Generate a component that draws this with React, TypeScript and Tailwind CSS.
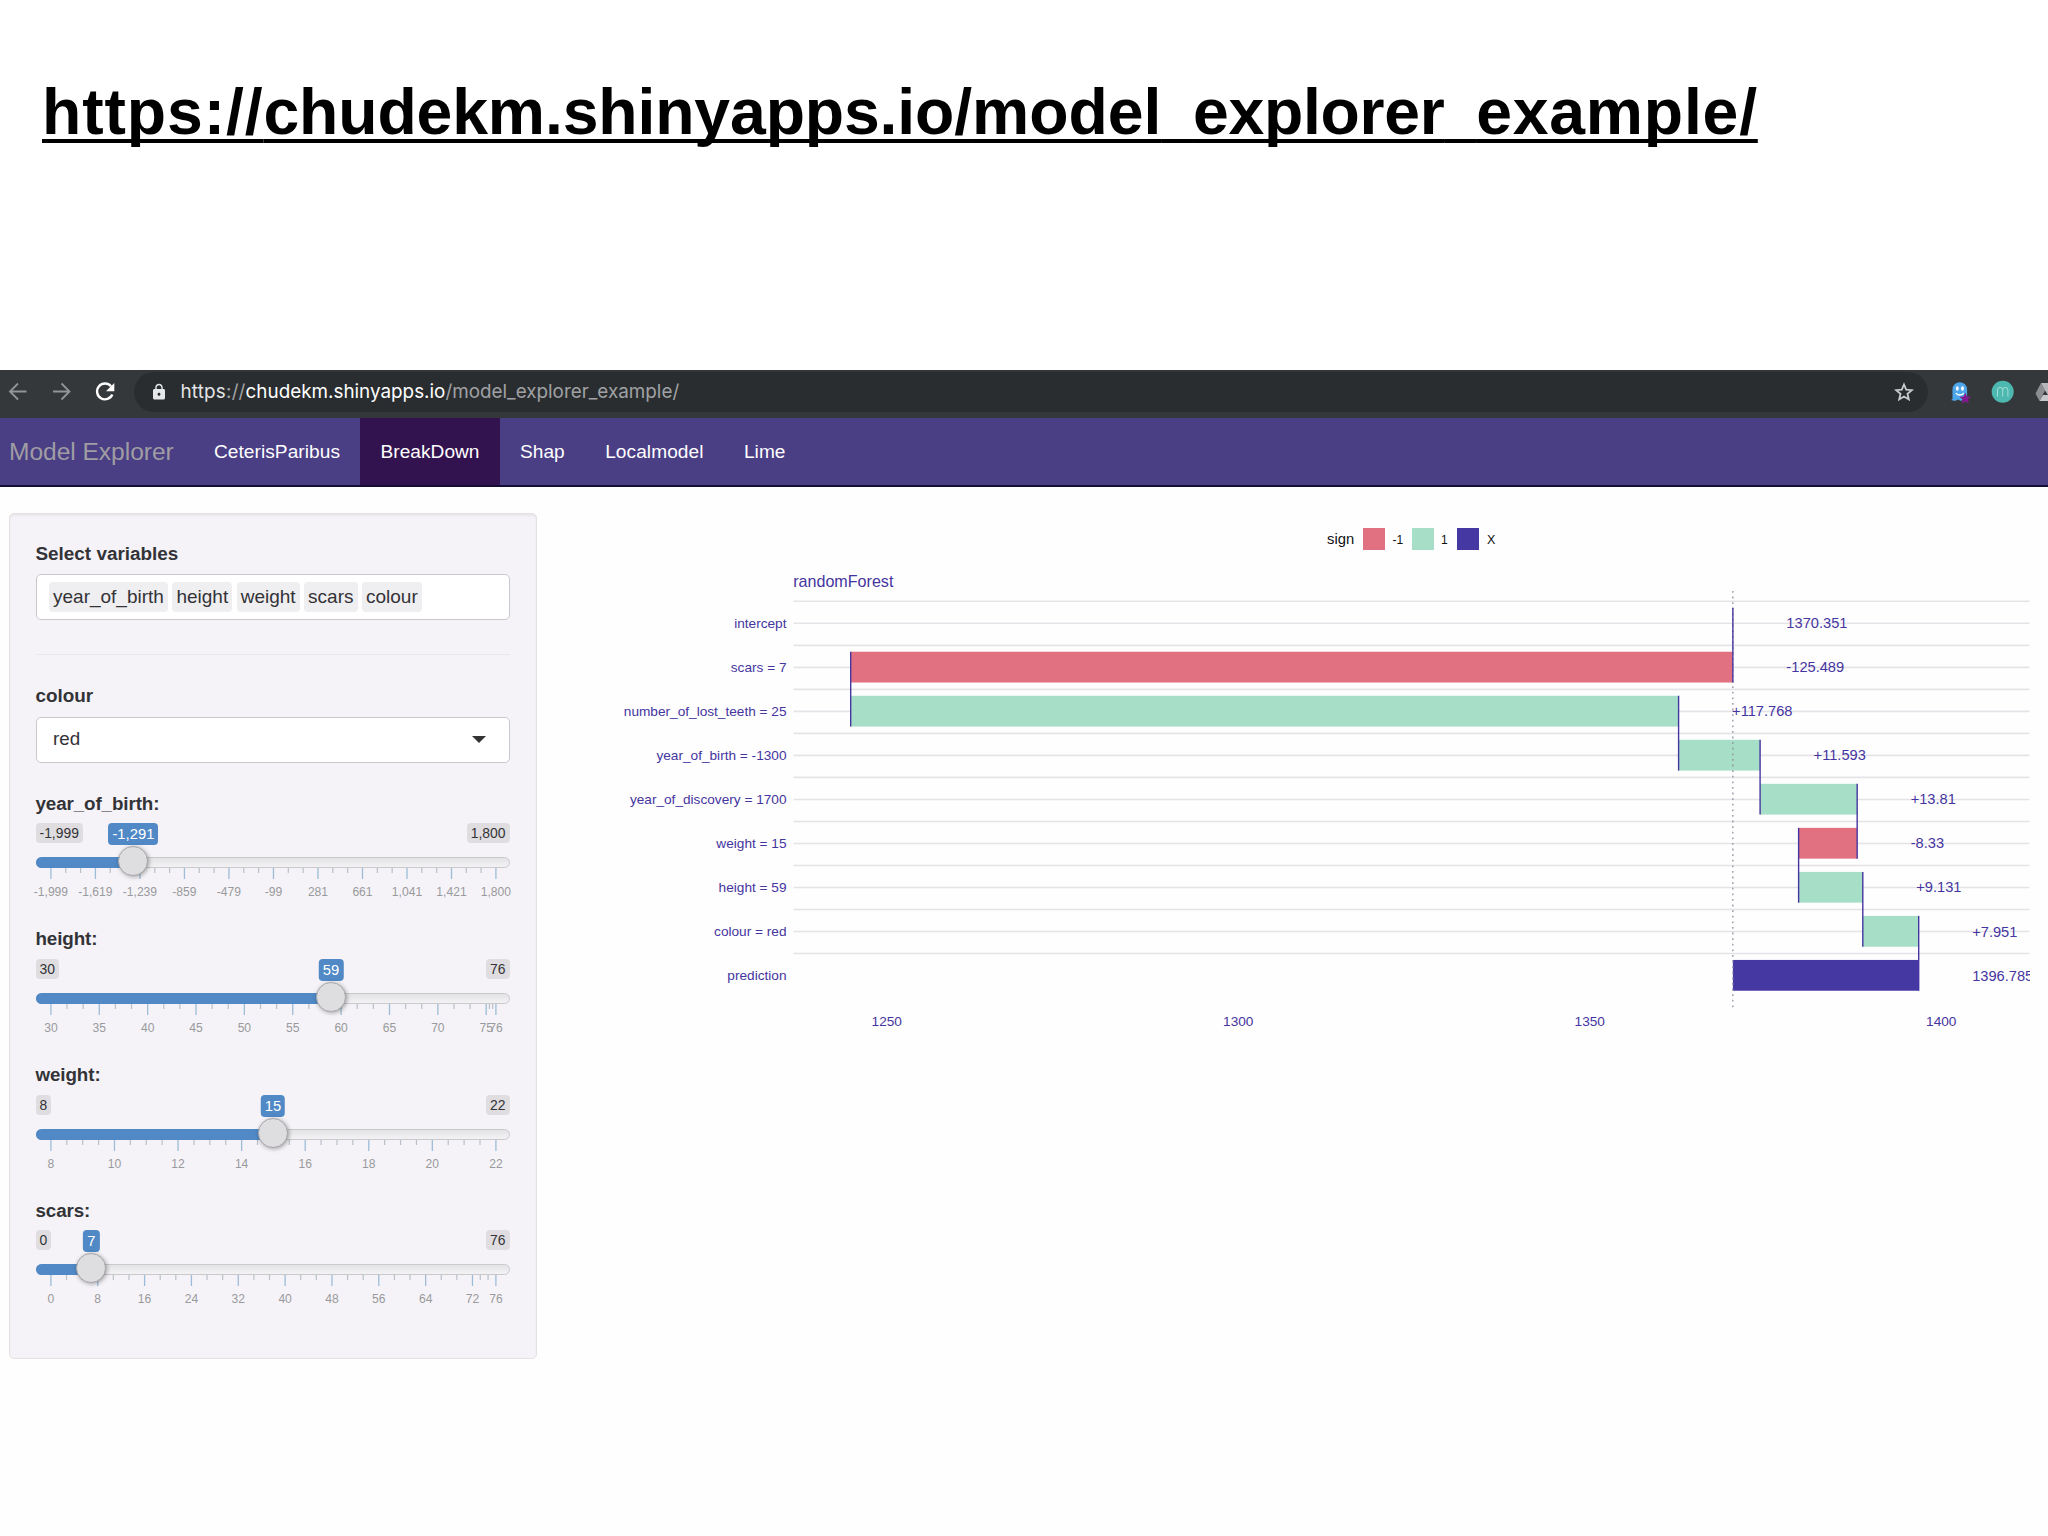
import { MdLock } from 'react-icons/md';

const navItems = ['CeterisParibus', 'BreakDown', 'Shap', 'Localmodel', 'Lime'];
const variables = ['year_of_birth', 'height', 'weight', 'scars', 'colour'];

type SliderProps = {
  name: string;
  min: number;
  max: number;
  value: number;
  ticks: number[];
  minor: number;
};

const sliders: SliderProps[] = [
  {
    name: 'year_of_birth',
    min: -1999,
    max: 1800,
    value: -1291,
    ticks: [-1999, -1619, -1239, -859, -479, -99, 281, 661, 1041, 1421, 1800],
    minor: 2,
  },
  { name: 'height', min: 30, max: 76, value: 59, ticks: [30, 35, 40, 45, 50, 55, 60, 65, 70, 75, 76], minor: 2 },
  { name: 'weight', min: 8, max: 22, value: 15, ticks: [8, 10, 12, 14, 16, 18, 20, 22], minor: 3 },
  { name: 'scars', min: 0, max: 76, value: 7, ticks: [0, 8, 16, 24, 32, 40, 48, 56, 64, 72, 76], minor: 2 },
];

const fmt = (n: number) => n.toLocaleString('en-US');

function Slider({ name, min, max, value, ticks, minor }: SliderProps) {
  // the handle travels between 15px insets of the 474px track
  const pos = (v: number) => 14.9 + ((v - min) / (max - min)) * 445;
  const handle = pos(value) + 0.1;
  const small = ticks.slice(1).flatMap((t, i) =>
    Array.from({ length: minor }, (_, k) => pos(ticks[i] + ((t - ticks[i]) * (k + 1)) / (minor + 1)))
  );

  return (
    <div className="h-[135.75px]">
      <label className="block h-[27px] text-[18.8px] leading-[27px] font-bold tracking-[-0.1px]">{name}:</label>
      <div className="relative mt-[6.6px] flex h-[34px] items-start justify-between text-[13.9px] leading-[20px]">
        <span className="rounded-[4px] bg-[#dfdde0] px-[4px]">{fmt(min)}</span>
        <span className="rounded-[4px] bg-[#dfdde0] px-[4px]">{fmt(max)}</span>
        <span
          className="absolute top-0 -translate-x-1/2 rounded-[4px] bg-[#5089c6] px-[4px] text-[14.8px] leading-[22px] text-white"
          style={{ left: handle }}
        >
          {fmt(value)}
        </span>
      </div>
      <div className="relative h-[11px] rounded-full border border-[#c9c8cb] bg-linear-to-b from-[#e3e2e5] to-[#f3f2f4]">
        <div className="absolute -top-px -left-px h-[11px] rounded-l-full bg-[#5089c6]" style={{ width: handle }} />
        <div
          className="absolute -top-[12px] z-10 size-[30px] -translate-x-1/2 rounded-full border border-[#a8a7aa] bg-[#dedddf] shadow-[1px_1px_4px_rgba(0,0,0,0.35)]"
          style={{ left: handle - 1 }}
        />
      </div>
      <svg className="block overflow-visible" width="474" height="34">
        {small.map((x, i) => (
          <line key={i} x1={x} x2={x} y1="0" y2="5" stroke="#b9c0cb" strokeWidth="1.2" />
        ))}
        {ticks.map((t) => (
          <g key={t}>
            <line x1={pos(t)} x2={pos(t)} y1="0" y2="11" stroke="#9dbcd8" strokeWidth="1.3" />
            <text x={pos(t)} y="28.3" textAnchor="middle" fontSize="12.1" fill="#999a9d">
              {fmt(t)}
            </text>
          </g>
        ))}
      </svg>
    </div>
  );
}

const colors = { neg: '#e17180', pos: '#a6dec7', x: '#4638a2' };

const rows = [
  { label: 'intercept', from: 1370.351, to: 1370.351, text: '1370.351', fill: colors.x },
  { label: 'scars = 7', from: 1370.351, to: 1244.862, text: '-125.489', fill: colors.neg },
  { label: 'number_of_lost_teeth = 25', from: 1244.862, to: 1362.63, text: '+117.768', fill: colors.pos },
  { label: 'year_of_birth = -1300', from: 1362.63, to: 1374.223, text: '+11.593', fill: colors.pos },
  { label: 'year_of_discovery = 1700', from: 1374.223, to: 1388.033, text: '+13.81', fill: colors.pos },
  { label: 'weight = 15', from: 1388.033, to: 1379.703, text: '-8.33', fill: colors.neg },
  { label: 'height = 59', from: 1379.703, to: 1388.834, text: '+9.131', fill: colors.pos },
  { label: 'colour = red', from: 1388.834, to: 1396.785, text: '+7.951', fill: colors.pos },
  { label: 'prediction', from: 1370.351, to: 1396.785, text: '1396.785', fill: colors.x },
];

const STEP = 44.03;
const HALF = 15.4;
const sx = (v: number) => 286.8 + (v - 1250) * 7.03;
const sy = (i: number) => 110.1 + i * STEP;

function BreakDownChart() {
  return (
    <svg width="1430" height="540" className="block" fill="#4535a0">
      <g fill="#111">
        <text x="727" y="31" fontSize="14.8">sign</text>
        <rect x="763" y="15" width="22" height="22" fill={colors.neg} />
        <text x="792.5" y="31" fontSize="12">-1</text>
        <rect x="812" y="15" width="22" height="22" fill={colors.pos} />
        <text x="841" y="31" fontSize="12">1</text>
        <rect x="857" y="15" width="22" height="22" fill={colors.x} />
        <text x="887" y="31" fontSize="12.5">X</text>
      </g>
      <text x="193.2" y="74" fontSize="16.1">randomForest</text>

      {Array.from({ length: 17 }, (_, i) => (
        <line key={i} x1="193.5" x2="1429.5" y1={88.3 + (i * STEP) / 2} y2={88.3 + (i * STEP) / 2} stroke="#e5e3e8" strokeWidth="1.6" />
      ))}

      {rows.map((r, i) => (
        <rect
          key={r.label}
          x={sx(Math.min(r.from, r.to))}
          y={sy(i) - HALF}
          width={Math.abs(sx(r.to) - sx(r.from))}
          height={HALF * 2}
          fill={r.fill}
        />
      ))}
      <line x1={sx(1370.351)} x2={sx(1370.351)} y1="78" y2="497" stroke="#8a8797" strokeWidth="1.2" strokeDasharray="1.8 3.8" />

      {/* connectors run from the top of a bar to the bottom of the next one */}
      {rows.slice(0, -1).map((r, i) => (
        <line key={r.label} x1={sx(r.to)} x2={sx(r.to)} y1={sy(i) - HALF} y2={sy(i + 1) + HALF} stroke="#4535a0" strokeWidth="1.4" />
      ))}

      {rows.map((r, i) => (
        <g key={r.label}>
          <text x="186.5" y={sy(i) + 4.8} textAnchor="end" fontSize="13.65">{r.label}</text>
          <text x={sx(Math.max(r.from, r.to)) + 53.5} y={sy(i) + 5.2} fontSize="14.65">{r.text}</text>
        </g>
      ))}
      {[1250, 1300, 1350, 1400].map((v) => (
        <text key={v} x={sx(v)} y="513.2" textAnchor="middle" fontSize="13.65">{v}</text>
      ))}
    </svg>
  );
}

function Extensions() {
  return (
    <svg width="120" height="44" className="shrink-0">
      <path d="M24.500 27V17.500a7.300 7.300 0 0 1 14.600 0V28l-3.600-1-2.500 2-3-1.500-3 1.500-4-1z" fill="#4da5ea" />
      <ellipse cx="29.300" cy="16.500" rx="1.400" ry="2.200" fill="#fff" />
      <ellipse cx="34.500" cy="16.500" rx="1.400" ry="2.200" fill="#fff" />
      <path d="M27.800 21.200q4 3.600 8 0" fill="none" stroke="#fff" strokeWidth="1.4" />
      <path d="M37.300 20.500l1.600 4 4.300.2-3.300 2.800 1.100 4.200-3.700-2.300-3.600 2.300 1-4.200-3.300-2.800 4.300-.2z" fill="#84198f" />
      <circle cx="74.700" cy="19.700" r="11" fill="#4db8b0" />
      <path d="M69.500 24.500V18q0-2.600 2.600-2.600t2.600 2.600v6.500M74.700 18q0-2.600 2.600-2.600t2.600 2.600v6.500" fill="none" stroke="#a5ded9" strokeWidth="1" />
      <path d="M113 11L107.500 21.500L111.500 29L117 18.500z" fill="#8b8d90" />
      <path d="M113 11H120V23L117 18.500z" fill="#b5b6b8" />
      <path d="M111.500 29L115 23H120V29z" fill="#c6c7c9" />
    </svg>
  );
}

function BrowserBar() {
  return (
    <div className="flex h-12 items-center overflow-hidden bg-[#35383b]">
      <svg width="134" height="44" fill="none" stroke="#929497" strokeWidth="1.8" className="shrink-0">
        <path d="M26.5 19.500H10.5M18 11.500L10 19.500L18 27.500" />
        <path d="M53 19.500H69M61.500 11.500L69.500 19.500L61.500 27.500" />
        <path d="M111 14.300A7.900 7.900 0 1 0 112.300 22.500" stroke="#fff" strokeWidth="2.400" />
        <path d="M114.300 11V19.300H106z" fill="#fff" stroke="none" />
      </svg>
      <div className="-mt-1 flex h-10 w-[1794px] shrink-0 items-center rounded-full bg-[#2a2d2f] pr-[14px] pl-[16px]">
        <MdLock className="mr-[12.5px] size-[18px] text-[#e6e7e8]" />
        <span className="font-[Inter,sans-serif] text-[18.85px] text-[#a0a2a5]">
          <span className="tracking-[0.2px]">
            <span className="text-[#e3e4e5]">https</span>://
          </span>
          <span className="text-white">chudekm.shinyapps.io</span>/model_explorer_example/
        </span>
        <svg width="20" height="20" viewBox="0 0 20 20" fill="none" stroke="#c9cbcd" strokeWidth="1.8" className="ml-auto">
          <path d="M10 2.500L12.200 7.700L17.800 8.200L13.500 11.900L14.800 17.400L10 14.500L5.200 17.400L6.500 11.900L2.200 8.200L7.800 7.700Z" />
        </svg>
      </div>
      <Extensions />
    </div>
  );
}

export default function App() {
  return (
    <div className="h-[1536px] w-[2048px] overflow-hidden bg-[#fefefe] font-['Liberation_Sans',Arial,sans-serif] text-[#333337]">
      <header className="h-[370px] bg-white pt-[75px] pl-[42px]">
        <h1 className="text-[64.3px] leading-[74px] font-bold whitespace-nowrap text-black underline decoration-[3.5px] underline-offset-[5px] [text-decoration-skip-ink:none]">
          <span className="tracking-[0.9px]">https://</span>
          <span className="tracking-[-0.12px]">chudekm.shinyapps.io/</span>model
          <span className="tracking-[-4px]">_</span>
          <span className="tracking-[-0.3px]">explorer</span>
          <span className="tracking-[-4px]">_</span>
          <span className="tracking-[0.8px]">example/</span>
        </h1>
      </header>

      <BrowserBar />

      <nav className="flex h-[69px] items-stretch border-b-2 border-[#150d35] bg-[#4a3e85] text-[19.1px] leading-[67px] text-white">
        <span className="mr-[20px] pl-[9px] text-[24.6px] tracking-[-0.05px] text-[#9f9da2]">Model Explorer</span>
        {navItems.map((item) => (
          <a key={item} className={item === 'BreakDown' ? 'bg-[#33134f] px-[20.2px] tracking-[0.04px]' : 'px-[20.2px] tracking-[0.07px]'}>
            {item}
          </a>
        ))}
      </nav>

      <main className="flex">
        <aside className="mt-[26px] ml-[9px] h-[846px] w-[528px] shrink-0 rounded-[5px] border border-[#e2e1e4] bg-[#f5f3f7] pt-[24px] pr-[26.5px] pl-[25.5px] shadow-[inset_0_2px_2px_rgba(0,0,0,0.05)]">
          <label className="block h-[35.5px] text-[18.9px] leading-[31px] font-bold">Select variables</label>
          <div className="flex h-[46px] items-center gap-[4.5px] rounded-[5px] border border-[#c9c8cc] bg-white px-[12.5px] text-[19px]">
            {variables.map((v) => (
              <span key={v} className="rounded-[4px] bg-[#efeef1] px-[4px] leading-[30px]">{v}</span>
            ))}
          </div>
          <hr className="mt-[34px] border-[#e9e8eb]" />
          <label className="mt-[27px] block h-[35px] text-[18.9px] leading-[28px] font-bold">colour</label>
          <div className="mb-[27px] flex h-[46px] items-center justify-between rounded-[5px] border border-[#c9c8cc] bg-white pr-[23px] pl-[16.5px] text-[18.8px]">
            red
            <svg width="14" height="7" fill="#333">
              <path d="M0 0H14L7 7Z" />
            </svg>
          </div>
          {sliders.map((s) => (
            <Slider key={s.name} {...s} />
          ))}
        </aside>
        <section className="mt-[26px] ml-[63px]">
          <BreakDownChart />
        </section>
      </main>
    </div>
  );
}
